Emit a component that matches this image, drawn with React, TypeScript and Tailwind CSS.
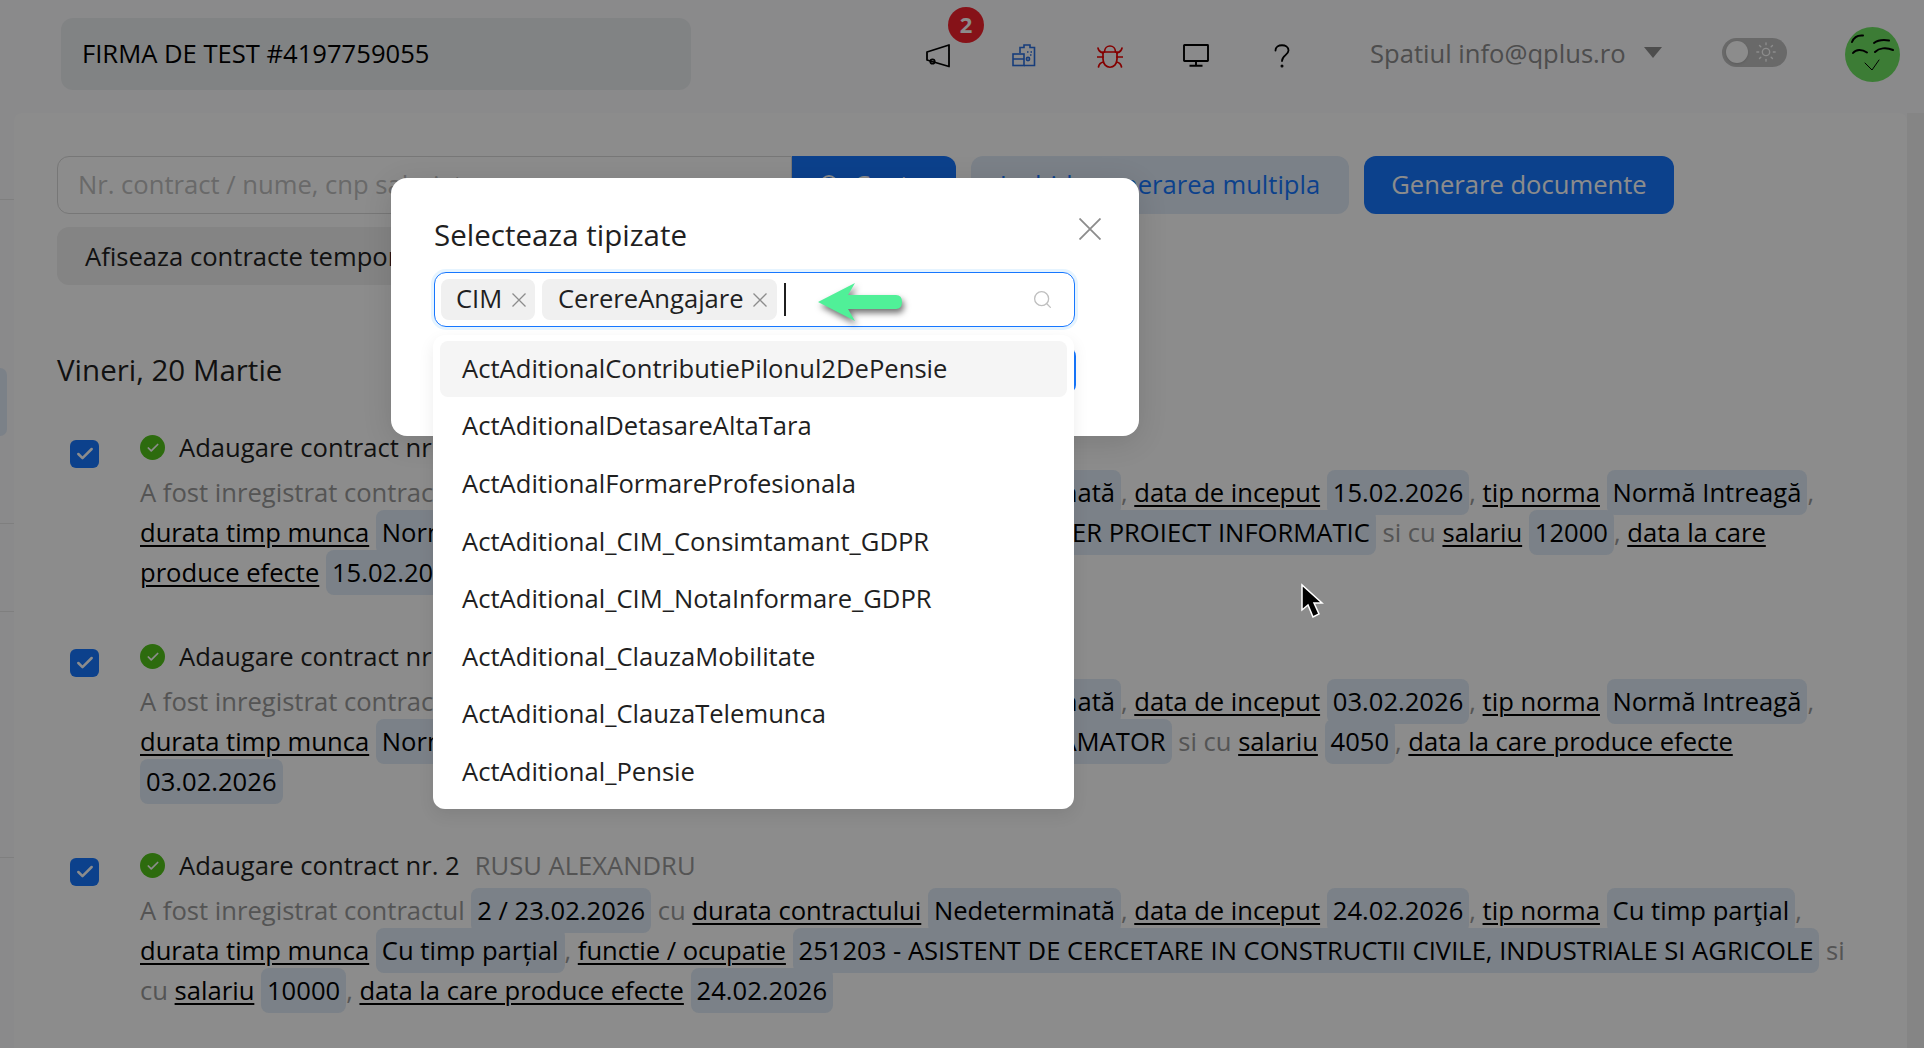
import React from "react";
import { Check, Search, Sun } from "lucide-react";

const Chip = ({ children }: { children: React.ReactNode }) => (
  <span className="bg-[#e0ebf7] text-black font-medium rounded-lg px-[6px] py-[5px]">{children}</span>
);

const Lnk = ({ children }: { children: React.ReactNode }) => (
  <span className="text-black font-medium underline underline-offset-[3px] decoration-[1.5px]">{children}</span>
);

const contracts = [
  {
    nr: "4",
    name: "POPESCU ANDREI",
    contract: "4 / 15.02.2026",
    start: "15.02.2026",
    norma: "Normă Intreagă",
    timp: "Normă Intreagă",
    functie: "251201 - IT+C MANAGER PROIECT INFORMATIC",
    salariu: "12000",
  },
  {
    nr: "3",
    name: "IONESCU MIHAI",
    contract: "3 / 03.02.2026",
    start: "03.02.2026",
    norma: "Normă Intreagă",
    timp: "Normă Intreagă",
    functie: "251401 - SEF. PROGRAMATOR",
    salariu: "4050",
  },
  {
    nr: "2",
    name: "RUSU ALEXANDRU",
    contract: "2 / 23.02.2026",
    start: "24.02.2026",
    norma: "Cu timp parţial",
    timp: "Cu timp parțial",
    functie: "251203 - ASISTENT DE CERCETARE IN CONSTRUCTII CIVILE, INDUSTRIALE SI AGRICOLE",
    salariu: "10000",
  },
];

const options = [
  "ActAditionalContributiePilonul2DePensie",
  "ActAditionalDetasareAltaTara",
  "ActAditionalFormareProfesionala",
  "ActAditional_CIM_Consimtamant_GDPR",
  "ActAditional_CIM_NotaInformare_GDPR",
  "ActAditional_ClauzaMobilitate",
  "ActAditional_ClauzaTelemunca",
  "ActAditional_Pensie",
];

const Cross = ({ size, width = 1.3 }: { size: number; width?: number }) => (
  <svg width={size} height={size} viewBox={`0 0 ${size} ${size}`} stroke="#8c8c8c" strokeWidth={width} fill="none">
    <path d={`M0.5 0.5 L${size - 0.5} ${size - 0.5} M${size - 0.5} 0.5 L0.5 ${size - 0.5}`} />
  </svg>
);

const Megaphone = () => (
  <svg width="24" height="24" viewBox="0 0 24 24" fill="none" stroke="#000" strokeWidth="1.8" strokeLinejoin="round">
    <path d="M23 1 L1 8 V16 L23 22.5 Z" />
    <circle cx="6.5" cy="17.5" r="2.2" />
  </svg>
);

const ClipboardDoc = () => (
  <svg width="24" height="24" viewBox="0 0 24 24" fill="none" stroke="#2a6fe0" strokeWidth="1.6">
    <path d="M8 9 V3.5 H12 V1 H18 V3.5 H22.5 V21.5 H12" />
    <rect x="1" y="10" width="11" height="11.5" />
    <path d="M1 15 H12 M15 8 h1.5 M18.5 8 h1.5 M18 11 h1.5" />
    <circle cx="16" cy="15" r="1.6" />
  </svg>
);

const BugIcon = () => (
  <svg width="26" height="26" viewBox="0 0 26 26" fill="none" stroke="#f00000" strokeWidth="1.7" strokeLinecap="round">
    <path d="M7.5 9 C7.5 1 18.5 1 18.5 9" />
    <path d="M6 9 H20 V16 C20 27 6 27 6 16 Z" />
    <path d="M1 5 C1.5 8 3 9 6 10 M25 5 C24.5 8 23 9 20 10 M0.5 14 H6 M25.5 14 H20 M1.5 24 C2 21 3.5 19.5 6.5 19 M24.5 24 C24 21 22.5 19.5 19.5 19" />
  </svg>
);

const MonitorIcon = () => (
  <svg width="26" height="23" viewBox="0 0 26 23" fill="none" stroke="#000" strokeWidth="1.9">
    <rect x="1" y="1" width="24" height="16" rx="0.5" />
    <path d="M13 17 V21.5 M6.5 21.8 H19.5" />
  </svg>
);

const Question = () => (
  <svg width="16" height="24" viewBox="0 0 16 24" fill="none" stroke="#000" strokeWidth="1.8" strokeLinecap="round">
    <path d="M1.5 6.5 C1.5 -0.5 14.5 -0.5 14.5 6.5 C14.5 11 8 11.5 8 17" />
    <circle cx="8" cy="22" r="0.6" />
  </svg>
);

const Avatar = () => (
  <svg width="55" height="55" viewBox="0 0 55 55" fill="none" stroke="#000" strokeLinecap="round">
    <circle cx="27.5" cy="27.5" r="27.5" fill="#6ee262" stroke="none" />
    <path d="M7 15 C9 10 13 8 18 8.5" strokeWidth="2" />
    <path d="M29 16 C33 13 38 12.5 44 13.5" strokeWidth="2" />
    <path d="M8 26 C11 22 17 22 22 25.5" strokeWidth="2" />
    <path d="M30 25 C34 21 41 20 48 23" strokeWidth="2" />
    <path d="M20 36 L27 43 L34 33" strokeWidth="1" />
  </svg>
);

export default function App() {
  return (
    <div className="relative h-screen overflow-hidden bg-[#fbfbfd] font-['Open_Sans',sans-serif] text-[25.6px] text-[#1f1f1f]">
      <header className="flex items-center h-[113px] pb-[6px]">
        <div className="ml-[61px] w-[630px] h-[72px] flex items-center pl-[21px] pt-[1px] rounded-xl bg-[#eceef0] text-black">
          FIRMA DE TEST #4197759055
        </div>
        <div className="flex items-center ml-[204px] mt-[4px]">
          <div className="relative w-[86px] flex justify-center">
            <Megaphone />
            <span className="absolute left-[53px] top-[-37px] w-[36px] h-[36px] rounded-full bg-[#f5222d] text-white text-[22px] font-bold flex items-center justify-center">
              2
            </span>
          </div>
          <div className="w-[86px] flex justify-center">
            <ClipboardDoc />
          </div>
          <div className="w-[86px] flex justify-center">
            <BugIcon />
          </div>
          <div className="w-[86px] flex justify-center">
            <MonitorIcon />
          </div>
          <div className="w-[86px] flex justify-center">
            <Question />
          </div>
        </div>
        <div className="flex items-center ml-[45px] text-[#8c8c8c] mt-[2px]">
          <span>Spatiul info@qplus.ro</span>
          <span className="ml-[18px] mb-[4px] w-0 h-0 border-x-[9px] border-x-transparent border-t-[11px] border-t-[#8c8c8c]" />
        </div>
        <div className="ml-[60px] w-[65px] h-[29px] rounded-full bg-[#bfbfbf] flex items-center pl-[4px] gap-[7px] mt-[-3px]">
          <span className="w-[22px] h-[22px] rounded-full bg-white shadow" />
          <Sun size={22} strokeWidth={1.5} color="#fff" />
        </div>
        <div className="ml-[58px] mt-[1px]">
          <Avatar />
        </div>
      </header>

      <div className="flex h-[935px]">
        <aside className="w-[14px] shrink-0">
          <div className="h-[87px] border-b border-[#e8e8e8]" />
          <div className="h-[324px] border-b border-[#e8e8e8] pt-[168px]">
            <div className="w-[7px] h-[68px] rounded-r-lg bg-[#e0ebf7]" />
          </div>
          <div className="h-[88px] border-b border-[#e8e8e8]" />
          <div className="h-[246px] border-b border-[#e8e8e8]" />
        </aside>

        <main className="w-[1893px] bg-white rounded-t-lg pl-[43px] pt-[43px]">
          <div className="flex items-center gap-[15px]">
            <div className="flex">
              <input
                className="w-[735px] h-[58px] pl-[20px] pb-[2px] border border-[#d9d9d9] rounded-l-xl outline-none placeholder:text-[#bfbfbf]"
                placeholder="Nr. contract / nume, cnp salariat"
              />
              <button className="w-[164px] h-[58px] bg-[#1677ff] text-white rounded-r-xl flex items-center pl-[26px] gap-[12px]">
                <Search size={24} strokeWidth={1.8} />
                Cauta
              </button>
            </div>
            <button className="w-[378px] h-[58px] pt-[1px] rounded-xl bg-[#e0ebf7] text-[#1677ff] font-medium">
              Inchide generarea multipla
            </button>
            <button className="w-[310px] h-[58px] pt-[1px] rounded-xl bg-[#1677ff] text-white font-medium">
              Generare documente
            </button>
          </div>

          <div className="mt-[13px] w-[420px] h-[58px] pt-[2px] rounded-xl bg-[#f0f0f0] flex items-center pl-[28px] whitespace-nowrap">
            Afiseaza contracte temporare
          </div>

          <h2 className="mt-[67px] h-[36px] leading-[36px] text-[29.5px] font-medium">Vineri, 20 Martie</h2>

          <div className="mt-[40px] flex flex-col gap-[44px]">
            {contracts.map((c) => (
              <div key={c.nr} className="flex">
                <div className="w-[83px] shrink-0 pl-[13px] pt-[12px]">
                  <div className="w-[29px] h-[28px] rounded-md bg-[#1677ff] flex items-center justify-center">
                    <Check size={20} strokeWidth={3} color="#fff" />
                  </div>
                </div>
                <div className="w-[1725px]">
                  <div className="flex items-center h-[40px] mb-[5px]">
                    <span className="w-[25px] h-[25px] rounded-full bg-[#52c41a] flex items-center justify-center mt-[-1px]">
                      <Check size={14} strokeWidth={3} color="#fff" />
                    </span>
                    <span className="ml-[14px] font-medium">Adaugare contract nr. {c.nr}</span>
                    <span className="ml-[15px] text-[#9a9a9a]">{c.name}</span>
                  </div>
                  <p className="leading-[40px] text-[#9a9a9a]">
                    A fost inregistrat contractul <Chip>{c.contract}</Chip> cu <Lnk>durata contractului</Lnk>{" "}
                    <Chip>Nedeterminată</Chip>, <Lnk>data de inceput</Lnk> <Chip>{c.start}</Chip>,{" "}
                    <Lnk>tip norma</Lnk> <Chip>{c.norma}</Chip>, <Lnk>durata timp munca</Lnk> <Chip>{c.timp}</Chip>,{" "}
                    <Lnk>functie / ocupatie</Lnk> <Chip>{c.functie}</Chip> si cu <Lnk>salariu</Lnk>{" "}
                    <Chip>{c.salariu}</Chip>, <Lnk>data la care produce efecte</Lnk> <Chip>{c.start}</Chip>
                  </p>
                </div>
              </div>
            ))}
          </div>
        </main>

        <div className="flex-1 bg-[#f2f2f2]" />
      </div>

      {/* mask + modal */}
      <div className="absolute inset-0 bg-black/45" />

      <div className="absolute left-[391px] top-[178px] w-[748px] h-[258px] bg-white rounded-2xl shadow-[0_6px_30px_rgba(0,0,0,0.12)] pl-[43px] pt-[37px]">
        <div className="absolute left-[688px] top-[40px]">
          <Cross size={22} width={1.8} />
        </div>
        <h3 className="text-[29.5px] leading-[40px] font-medium">Selecteaza tipizate</h3>
        <div className="mt-[17px] w-[641px] h-[55px] rounded-xl border border-[#1677ff] ring-[3px] ring-[#0591ff]/10 flex items-center pl-[6px]">
          <span className="flex items-center h-[41px] w-[94px] pl-[15px] rounded-lg bg-[#f0f0f0]">
            CIM
            <span className="ml-[10px]">
              <Cross size={14} />
            </span>
          </span>
          <span className="flex items-center h-[41px] w-[235px] ml-[7px] pl-[16px] rounded-lg bg-[#f0f0f0]">
            CerereAngajare
            <span className="ml-[9px]">
              <Cross size={14} />
            </span>
          </span>
          <span className="ml-[7px] w-[2px] h-[33px] bg-[#1f1f1f]" />
          <Search size={21} strokeWidth={1.5} color="#bfbfbf" className="ml-[246px]" />
        </div>
        <button className="mt-[21px] w-[642px] h-[45px] rounded-lg bg-[#1677ff]" />

        <svg
          className="absolute left-[425px] top-[103px] drop-shadow-[2px_4px_3px_rgba(0,0,0,0.55)]"
          width="88"
          height="42"
          viewBox="0 0 88 42"
        >
          <path
            d="M2 21 L39 2 L32 14 H80 Q86 14 86 21 Q86 28 80 28 H32 L39 40 Z"
            fill="#50f098"
          />
        </svg>

        <div className="absolute left-[42px] top-[157px] w-[641px] h-[474px] bg-white rounded-xl shadow-[0_6px_16px_rgba(0,0,0,0.08)] px-[7px] pt-[6px] flex flex-col gap-[1.6px]">
          {options.map((o, i) => (
            <div
              key={o}
              className={i === 0 ? "h-[56px] shrink-0 flex items-center pl-[22px] rounded-lg bg-[#f5f5f5]" : "h-[56px] shrink-0 flex items-center pl-[22px]"}
            >
              {o}
            </div>
          ))}
        </div>
      </div>

      {/* mouse pointer */}
      <svg className="absolute left-[1300px] top-[583px]" width="24" height="37" viewBox="0 0 24 37">
        <path d="M2 2 V27 L8 22 L13 34 L19 31 L14 20 L22 20 Z" fill="#000" stroke="#fff" strokeWidth="1.5" />
      </svg>
    </div>
  );
}
